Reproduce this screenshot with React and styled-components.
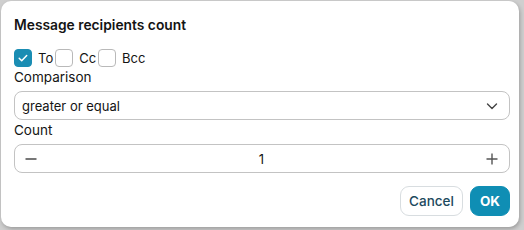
import styled, { createGlobalStyle } from "styled-components";

const GlobalStyle = createGlobalStyle`
  html, body {
    margin: 0;
    padding: 0;
    background: #cfcfcf;
  }
  body {
    font-family: Inter, "Noto Sans", sans-serif;
    color: #141414;
  }
`;

const Page = styled.div`
  width: 524px;
  height: 230px;
  padding: 1px 5px 3px 1px;
  box-sizing: border-box;
`;

const Dialog = styled.div`
  height: 100%;
  box-sizing: border-box;
  background: #fff;
  border-radius: 10px;
  box-shadow: 1px 2px 4px rgba(0, 0, 0, 0.25);
  padding: 14px 9px 11px 13px;
  display: flex;
  flex-direction: column;
`;

const Title = styled.h2`
  margin: 0 0 13px 0;
  font-size: 13.8px;
  font-weight: 600;
  line-height: 20px;
`;

const CheckRow = styled.div`
  display: flex;
  align-items: center;
  height: 20px;
`;

const CheckItem = styled.label`
  display: flex;
  align-items: center;
  gap: 6px;
  font-size: 13px;
  margin-right: 2px;
`;

const Box = styled.span`
  width: 18px;
  height: 18px;
  box-sizing: border-box;
  border-radius: 4px;
  border: 1px solid ${({ checked }) => (checked ? "#1a8db3" : "#b9b9b9")};
  background: ${({ checked }) => (checked ? "#1a8db3" : "#fff")};
  display: flex;
  align-items: center;
  justify-content: center;
`;

const Label = styled.div`
  font-size: 13.5px;
  line-height: 18px;
  margin: 0 0 5px 0;
`;

const Field = styled.div`
  height: 29px;
  box-sizing: border-box;
  border: 1px solid #c3c3c3;
  border-radius: 8px;
  display: flex;
  align-items: center;
  padding: 0 10px 0 7px;
  font-size: 13px;
  margin-bottom: 1px;
`;

const FieldText = styled.span`
  flex: 1;
  text-align: ${({ center }) => (center ? "center" : "left")};
`;

const IconBtn = styled.span`
  display: flex;
  align-items: center;
  color: #444;
  margin-left: ${({ left }) => (left ? "2px" : "0")};
`;

const Footer = styled.div`
  margin-top: auto;
  display: flex;
  justify-content: flex-end;
  gap: 7px;
`;

const Button = styled.button`
  height: 30px;
  border-radius: 9px;
  font-family: inherit;
  font-size: 13.5px;
  padding: 0 ${({ primary }) => (primary ? "9px" : "8px")};
  font-weight: ${({ primary }) => (primary ? 700 : 500)};
  border: 1px solid ${({ primary }) => (primary ? "#0f8eb4" : "#d8dde0")};
  background: ${({ primary }) => (primary ? "#0f8eb4" : "#fff")};
  color: ${({ primary }) => (primary ? "#fff" : "#1d4a5e")};
`;

const Check = ({ checked, label }) => (
  <CheckItem>
    <Box checked={checked}>
      {checked && (
        <svg width="12" height="12" viewBox="0 0 12 12">
          <path d="M2.2 6.2l2.5 2.5 5-5.2" fill="none" stroke="#fff" strokeWidth="1.5" strokeLinecap="round" strokeLinejoin="round" />
        </svg>
      )}
    </Box>
    <span>{label}</span>
  </CheckItem>
);

export default function App() {
  return (
    <>
      <GlobalStyle />
      <Page>
        <Dialog>
          <Title>Message recipients count</Title>
          <CheckRow>
            <Check checked label="To" />
            <Check label="Cc" />
            <Check label="Bcc" />
          </CheckRow>
          <Label>Comparison</Label>
          <Field>
            <FieldText>greater or equal</FieldText>
            <IconBtn>
              <svg width="14" height="14" viewBox="0 0 14 14">
                <path d="M2.5 5l4.5 4.5 4.5-4.5" fill="none" stroke="#444" strokeWidth="1.4" strokeLinecap="round" strokeLinejoin="round" />
              </svg>
            </IconBtn>
          </Field>
          <Label>Count</Label>
          <Field>
            <IconBtn left>
              <svg width="14" height="14" viewBox="0 0 14 14">
                <path d="M1.5 7h11" stroke="#555" strokeWidth="1.6" />
              </svg>
            </IconBtn>
            <FieldText center>1</FieldText>
            <IconBtn>
              <svg width="14" height="14" viewBox="0 0 14 14">
                <path d="M1.5 7h11M7 1.5v11" stroke="#555" strokeWidth="1.4" />
              </svg>
            </IconBtn>
          </Field>
          <Footer>
            <Button>Cancel</Button>
            <Button primary>OK</Button>
          </Footer>
        </Dialog>
      </Page>
    </>
  );
}
